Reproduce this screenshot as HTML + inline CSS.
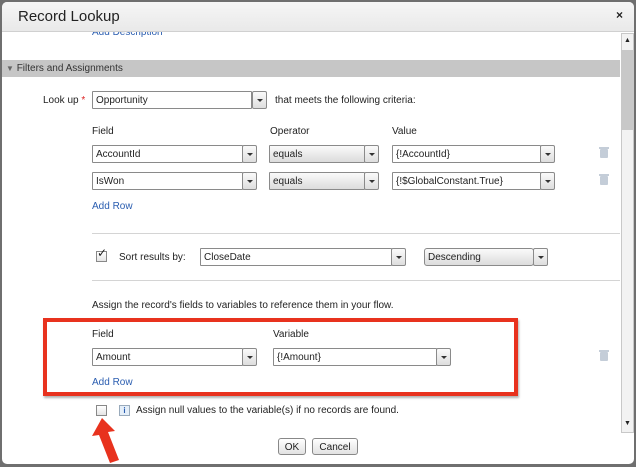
<!DOCTYPE html>
<html><head><meta charset="utf-8"><style>
*{box-sizing:border-box;margin:0;padding:0}
body{width:636px;height:467px;background:#6f6f6f;font-family:"Liberation Sans",Arial,sans-serif;font-size:10px;color:#222;position:relative;overflow:hidden}
.win{position:absolute;left:2px;top:2px;width:632px;height:462px;background:#fff;border-radius:5px;overflow:hidden}
.hdr{position:absolute;left:0;top:0;width:632px;height:30px;background:linear-gradient(#f6f6f6,#e9e9e9);border-bottom:1px solid #d0d0d0}
.a{position:absolute;white-space:nowrap}
.inp{position:absolute;height:18px;border:1px solid #8a8a8a;background:#fff;padding:3px 0 0 3px;font-size:10px;border-radius:1px}
.gr{background:linear-gradient(#fafafa,#dcdcdc)}
.btn{position:absolute;width:15px;height:18px;border:1px solid #8a8a8a;background:linear-gradient(#fafafa,#dedede);border-radius:2px}
.btn:after{content:"";position:absolute;left:4px;top:7px;border-left:3px solid transparent;border-right:3px solid transparent;border-top:3px solid #333}
.lnk{color:#2a5db0}
.trash{position:absolute;width:8px;height:9px;background:#c4cdd8;border-radius:1px}
.trash:before{content:"";position:absolute;left:-1px;top:-2px;width:10px;height:2px;background:#c4cdd8}
.hr{position:absolute;height:1px;background:#d4d4d4}
.cb{position:absolute;width:11px;height:11px;border:1px solid #888;background:linear-gradient(#fff,#e4e4e4)}
.pb{position:absolute;height:17px;border:1px solid #888;border-radius:3px;background:linear-gradient(#fff,#e2e2e2);font-size:10px;text-align:center;padding-top:3px}
</style></head><body>
<div class="win">
<div class="a lnk" style="left:90px;top:25px;font-size:10px">Add Description</div>
<div class="hdr"></div>
<div class="a" style="left:16px;top:6px;font-size:15px;color:#222">Record Lookup</div>
<div class="a" style="left:614px;top:6px;font-size:12px;font-weight:bold">×</div>
<div class="a" style="left:619px;top:31px;width:13px;height:400px;background:#f2f2f2;border:1px solid #c8c8c8"></div>
<div class="a" style="left:619px;top:48px;width:13px;height:80px;background:#c8c8c8"></div>
<div class="a" style="left:622px;top:35px;font-size:7px">▲</div>
<div class="a" style="left:622px;top:418px;font-size:7px">▼</div>
<div class="a" style="left:0;top:58px;width:618px;height:17px;background:#c6c6c6"></div>
<div class="a" style="left:4px;top:61px;font-size:10px;color:#333"><span style="font-size:8px;color:#666">▼</span> Filters and Assignments</div>
<div class="a" style="left:41px;top:93px">Look up <span style="color:#d22">*</span></div>
<div class="inp" style="left:90px;top:89px;width:160px">Opportunity</div><div class="btn" style="left:250px;top:89px"></div>
<div class="a" style="left:273px;top:93px">that meets the following criteria:</div>
<div class="a" style="left:90px;top:124px">Field</div>
<div class="a" style="left:268px;top:124px">Operator</div>
<div class="a" style="left:390px;top:124px">Value</div>
<div class="inp" style="left:90px;top:143px;width:151px">AccountId</div><div class="btn" style="left:240px;top:143px"></div>
<div class="inp gr" style="left:267px;top:143px;width:96px">equals</div><div class="btn" style="left:362px;top:143px"></div>
<div class="inp" style="left:390px;top:143px;width:149px">{!AccountId}</div><div class="btn" style="left:538px;top:143px"></div>
<div class="trash" style="left:598px;top:147px"></div>
<div class="inp" style="left:90px;top:170px;width:151px">IsWon</div><div class="btn" style="left:240px;top:170px"></div>
<div class="inp gr" style="left:267px;top:170px;width:96px">equals</div><div class="btn" style="left:362px;top:170px"></div>
<div class="inp" style="left:390px;top:170px;width:149px">{!$GlobalConstant.True}</div><div class="btn" style="left:538px;top:170px"></div>
<div class="trash" style="left:598px;top:174px"></div>
<div class="a lnk" style="left:90px;top:199px">Add Row</div>
<div class="hr" style="left:90px;top:231px;width:528px"></div>
<div class="cb" style="left:94px;top:249px"></div><div class="a" style="left:95px;top:244px;font-size:12px">✓</div>
<div class="a" style="left:117px;top:250px">Sort results by:</div>
<div class="inp" style="left:198px;top:246px;width:192px">CloseDate</div><div class="btn" style="left:389px;top:246px"></div>
<div class="inp gr" style="left:422px;top:246px;width:110px;border-radius:3px">Descending</div><div class="btn" style="left:531px;top:246px"></div>
<div class="hr" style="left:90px;top:278px;width:528px"></div>
<div class="a" style="left:90px;top:298px">Assign the record's fields to variables to reference them in your flow.</div>
<div class="a" style="left:41px;top:316px;width:475px;height:78px;border:4px solid #e8321e;box-shadow:1px 2px 2px rgba(0,0,0,.3)"></div>
<div class="a" style="left:90px;top:327px">Field</div>
<div class="a" style="left:271px;top:327px">Variable</div>
<div class="inp" style="left:90px;top:346px;width:151px">Amount</div><div class="btn" style="left:240px;top:346px"></div>
<div class="inp" style="left:271px;top:346px;width:164px">{!Amount}</div><div class="btn" style="left:434px;top:346px"></div>
<div class="trash" style="left:598px;top:350px"></div>
<div class="a lnk" style="left:90px;top:375px">Add Row</div>
<div class="cb" style="left:94px;top:403px"></div>
<div class="a" style="left:117px;top:403px;width:11px;height:11px;border:1px solid #9ab;background:#e4eef8;color:#2a5db0;font-size:8px;font-weight:bold;text-align:center;line-height:9px">i</div>
<div class="a" style="left:134px;top:403px">Assign null values to the variable(s) if no records are found.</div>
<div class="pb" style="left:276px;top:436px;width:28px">OK</div>
<div class="pb" style="left:310px;top:436px;width:46px">Cancel</div>
</div>
<svg class="a" style="left:0;top:0" width="636" height="467"><path d="M102 418 L92 436 L99 435 L110 463 L119 460 L108 432 L115 431 Z" fill="#e8321e"/></svg>
</body></html>
